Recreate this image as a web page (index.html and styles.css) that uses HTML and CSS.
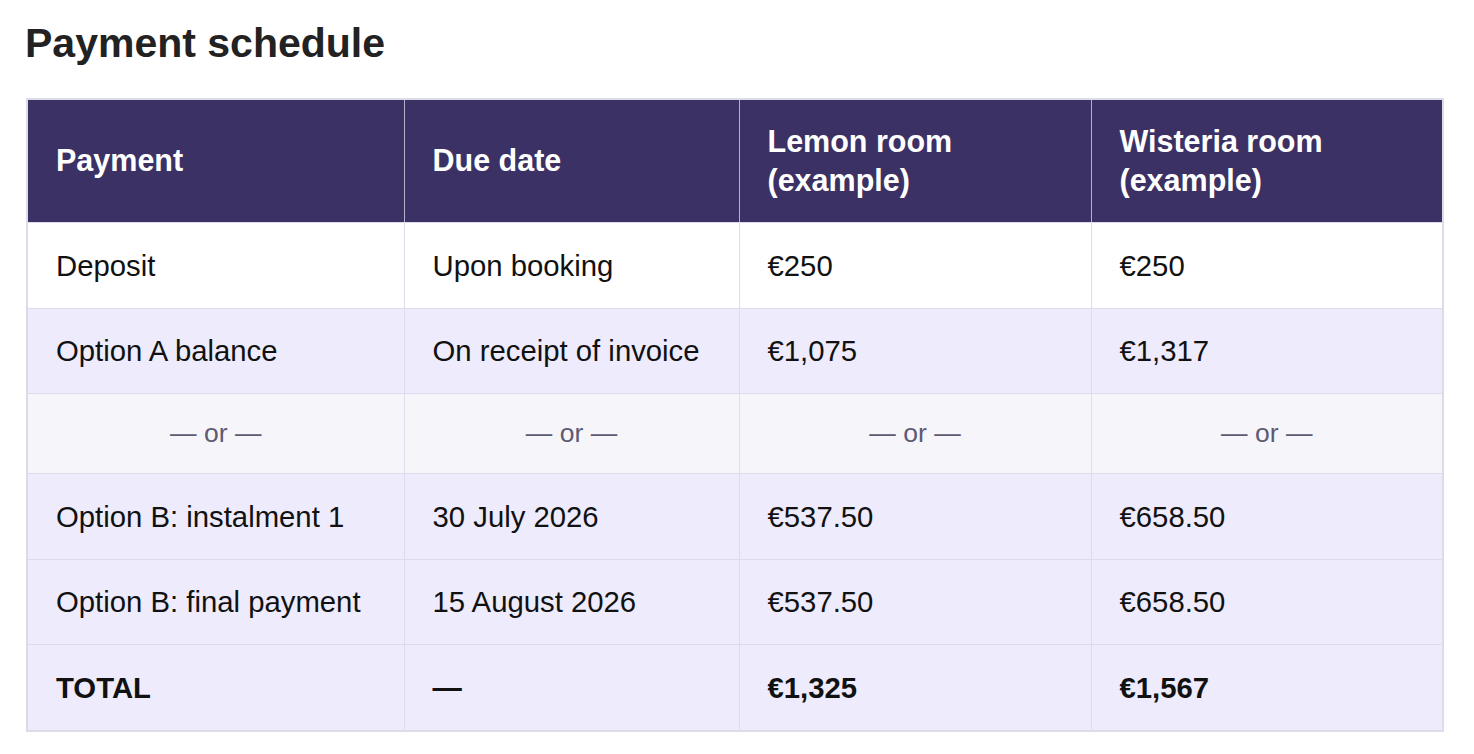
FILE: index.html
```html
<!DOCTYPE html>
<html lang="en">
<head>
<meta charset="utf-8">
<title>Payment schedule</title>
<link rel="stylesheet" href="styles.css">
</head>
<body>
<main class="page">
  <h1 class="title">Payment schedule</h1>
  <table class="schedule">
    <colgroup>
      <col class="c1"><col class="c2"><col class="c3"><col class="c4">
    </colgroup>
    <thead>
      <tr>
        <th>Payment</th>
        <th>Due date</th>
        <th>Lemon room<br>(example)</th>
        <th>Wisteria room<br>(example)</th>
      </tr>
    </thead>
    <tbody>
      <tr class="row-white">
        <td>Deposit</td><td>Upon booking</td><td>€250</td><td>€250</td>
      </tr>
      <tr class="row-tint">
        <td>Option A balance</td><td>On receipt of invoice</td><td>€1,075</td><td>€1,317</td>
      </tr>
      <tr class="row-or">
        <td>— or —</td><td>— or —</td><td>— or —</td><td>— or —</td>
      </tr>
      <tr class="row-tint">
        <td>Option B: instalment 1</td><td>30 July 2026</td><td>€537.50</td><td>€658.50</td>
      </tr>
      <tr class="row-tint">
        <td>Option B: final payment</td><td>15 August 2026</td><td>€537.50</td><td>€658.50</td>
      </tr>
      <tr class="row-tint row-total">
        <td>TOTAL</td><td>—</td><td>€1,325</td><td>€1,567</td>
      </tr>
    </tbody>
  </table>
</main>
</body>
</html>
```
FILE: styles.css
```css
html, body {
  margin: 0;
  padding: 0;
  background: #ffffff;
}
body {
  font-family: "Liberation Sans", Arial, sans-serif;
  color: #111111;
}
.page {
  padding: 19px 0 0 24px;
}
.title {
  margin: 0 0 31px 1px;
  font-size: 41px;
  line-height: 48px;
  font-weight: 700;
  color: #222222;
}
.schedule {
  border-collapse: collapse;
  table-layout: fixed;
  width: 1418px;
  margin-left: 2px;
  border: 2px solid #dcdbe8;
}
.c1 { width: 377px; }
.c2 { width: 335px; }
.c3 { width: 352px; }
.c4 { width: 352px; }
.schedule th {
  background: #3c3164;
  color: #ffffff;
  font-size: 30.5px;
  line-height: 1.3;
  font-weight: 700;
  text-align: left;
  vertical-align: middle;
  padding: 21.5px 28px;
  border-left: 1px solid #b3aecb;
  border-right: 1px solid #b3aecb;
  border-bottom: 1px solid #dcdbe8;
}
.schedule td {
  font-size: 29.3px;
  line-height: 1.35;
  padding: 22.5px 28px;
  vertical-align: middle;
  border: 1px solid #dedcec;
}
.row-white td { background: #ffffff; }
.row-tint td { background: #edebfc; }
.row-or td {
  background: #f6f5fa;
  color: #5d5a72;
  font-size: 26.5px;
  text-align: center;
  padding: 21.5px 28px;
}
.row-total td { font-weight: 700; }
```
